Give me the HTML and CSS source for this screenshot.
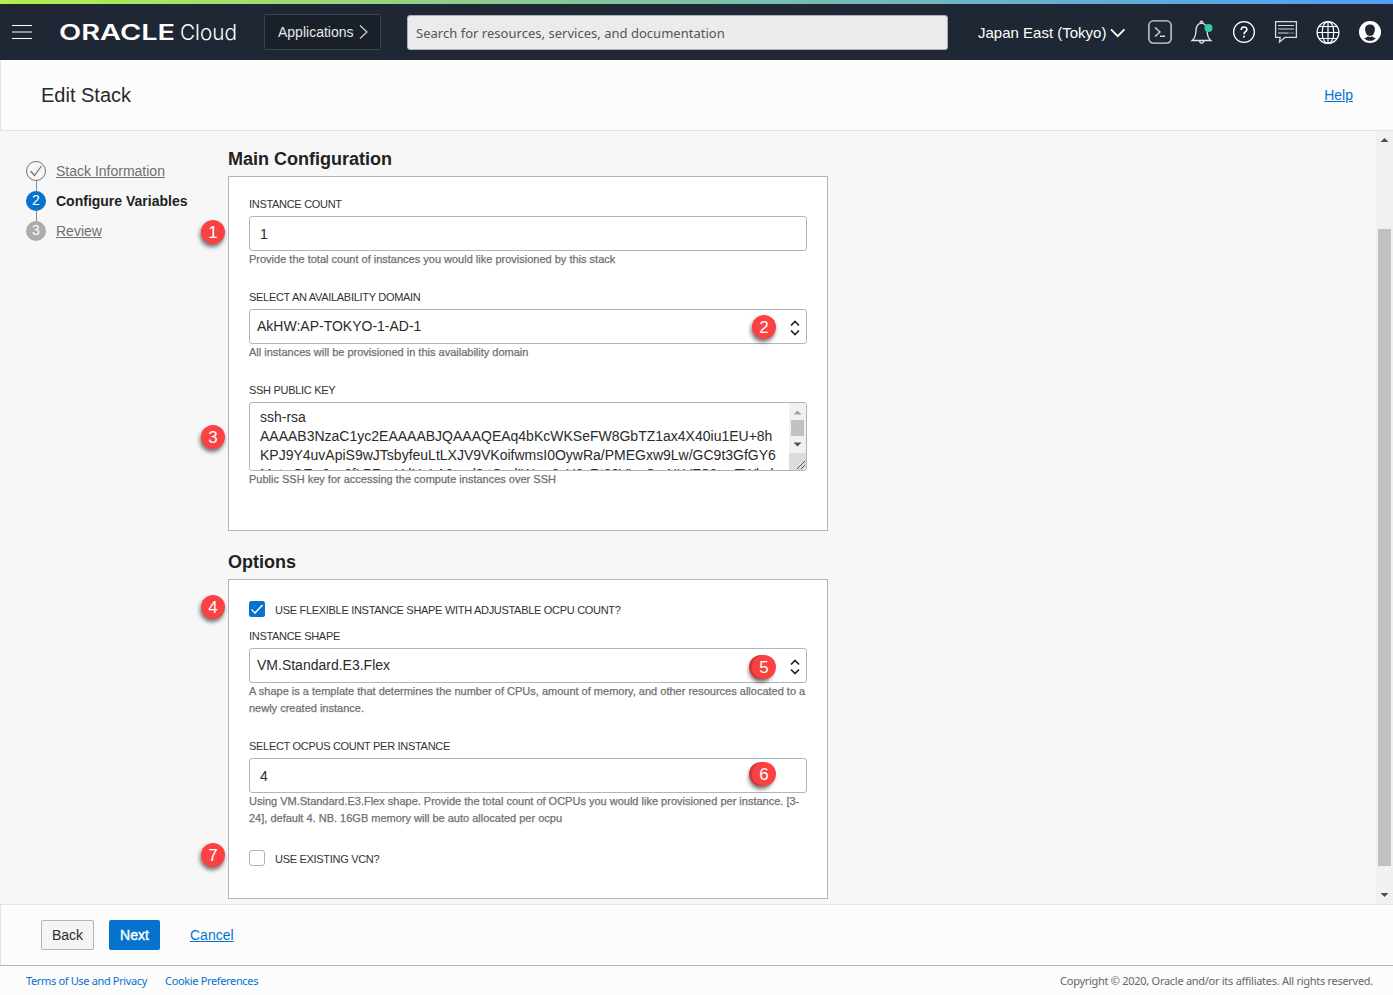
FILE: index.html
```html
<!DOCTYPE html>
<html lang="en">
<head>
<meta charset="utf-8">
<title>Edit Stack</title>
<link rel="stylesheet" href="styles.css">
</head>
<body>
<div class="stripe"></div>
<header class="topbar">
  <svg class="menu" width="20" height="16" viewBox="0 0 20 16"><path d="M0 1.5h20M0 14.5h20" stroke="#fff"/><path d="M0 8h20" stroke="#8e9398" stroke-width="2"/></svg>
  <svg class="logo" width="180" height="26" viewBox="0 0 180 26" fill="#fff"><text class="logo-oracle" x="-1" y="20.800" textLength="116" lengthAdjust="spacingAndGlyphs">ORACLE</text><text class="logo-cloud" x="120" y="20.800" textLength="57" lengthAdjust="spacingAndGlyphs">Cloud</text></svg>
  <div class="apps"><span>Applications</span><svg width="9" height="16" viewBox="0 0 9 16" fill="none" stroke="#d0d3d5" stroke-width="1.2"><path d="M1 1.5l7 6.5-7 6.5"/></svg></div>
  <div class="search">Search for resources, services, and documentation</div>
  <div class="region"><span>Japan East (Tokyo)</span><svg width="16" height="10" viewBox="0 0 16 10" fill="none" stroke="#fff" stroke-width="1.8"><path d="M1 1.3l6.7 6.8 6.7-6.8"/></svg></div>
  <div class="icons">
    <svg width="24" height="24" viewBox="0 0 24 24" fill="none" stroke="#d6d8da" stroke-width="1.4"><rect x=".9" y=".9" width="22.2" height="22.2" rx="4.5"/><path d="M7 7.5l5 4.5-5 4.5M12 16.3h5"/></svg>
    <svg width="24" height="24" viewBox="0 0 24 24" fill="none" stroke="#e4e6e7" stroke-width="1.3"><path d="M2.2 20.5c2.5-2 3.5-4.500 3.700-9.200C6.100 6.500 7.700 3.400 11.500 3.200c3.800.2 5.400 3.300 5.600 8.100.2 4.700 1.200 7.200 3.700 9.200zM9.500 20.500c.2 3.400 4.200 3.400 4.400 0M10.300 3.200c-.8-2.800 3.200-2.800 2.400 0"/><circle cx="18.500" cy="8" r="4" fill="#36c9a6" stroke="none"/></svg>
    <svg width="24" height="24" viewBox="0 0 24 24" fill="none" stroke="#fff" stroke-width="1.300"><circle cx="12" cy="12" r="10.400"/><path d="M9.200 10c0-3.900 5.700-3.900 5.700-.5 0 2.200-2.900 2.200-2.900 4.700" stroke-width="1.600"/><path d="M12 15.800v1.800" stroke-width="1.800"/></svg>
    <svg width="24" height="24" viewBox="0 0 24 24" fill="none" stroke="#d9dbdd" stroke-width="1.300"><path d="M1.600 1.600h20.800v15.800H11l-5.500 4.500.7-4.500H1.600z"/><path d="M4 5.500h16M4 9h16M4 13h10" stroke-width="1.200"/><path d="M14.500 13H20" stroke-width="1.200" stroke-dasharray="1 1"/></svg>
    <svg width="24" height="24" viewBox="0 0 24 24" fill="none" stroke="#fff" stroke-width="1.200"><circle cx="12" cy="12.500" r="10.900"/><ellipse cx="12" cy="12.500" rx="5.800" ry="10.900"/><path d="M12 1.600v21.800M1 12.500h22M3.200 6.500h17.600M3.200 18.500h17.600"/></svg>
    <svg width="24" height="24" viewBox="0 0 24 24"><circle cx="12" cy="12" r="11" fill="#fff"/><path d="M12 4.500c-3.500 0-5 2.300-4.900 5 .1 2.900 1.200 4.700 2.500 5.900.3 1-.5 1.800-3.500 2.600 3 3.800 8.800 3.800 11.800 0-3-.8-3.800-1.600-3.500-2.600 1.300-1.200 2.400-3 2.500-5.900.1-2.700-1.400-5-4.900-5z" fill="#1e2733"/><path d="M4.500 18.300c3-1.500 5.200-1.500 5.200-2.800 1.300 1.300 3.300 1.300 4.600 0 0 1.300 2.200 1.300 5.200 2.800" fill="none" stroke="#fff"/></svg>
  </div>
</header>
<section class="titlebar"><h1>Edit Stack</h1><a class="link">Help</a></section>
<div class="body">
  <nav class="steps">
    <div class="step"><svg width="20" height="20" viewBox="0 0 20 20" fill="none" stroke="#707070"><circle cx="10" cy="10" r="9.500"/><path d="M4.500 10l4 4.500 7-9.500" stroke-width="1.200"/></svg><a>Stack Information</a></div>
    <div class="step current"><span class="dot">2</span><b>Configure Variables</b></div>
    <div class="step todo"><span class="dot">3</span><a>Review</a></div>
  </nav>
  <main class="content">
    <h2>Main Configuration</h2>
    <div class="panel panel-main">
      <div class="field"><label>Instance count</label><div class="input">1</div><p>Provide the total count of instances you would like provisioned by this stack</p><span class="pin pin-side">1</span></div>
      <div class="field"><label>Select an availability domain</label><div class="input select"><span>AkHW:AP-TOKYO-1-AD-1</span><svg width="10" height="16" viewBox="0 0 10 16" fill="none" stroke="#222" stroke-width="1.700"><path d="M1 5.500l4-4 4 4M1 10.500l4 4 4-4"/></svg></div><p>All instances will be provisioned in this availability domain</p><span class="pin pin-in">2</span></div>
      <div class="field"><label>SSH public key</label>
        <div class="textarea"><div class="key"><div>ssh-rsa</div><div>AAAAB3NzaC1yc2EAAAABJQAAAQEAq4bKcWKSeFW8GbTZ1ax4X40iu1EU+8h</div><div>KPJ9Y4uvApiS9wJTsbyfeuLtLXJV9VKoifwmsI0OywRa/PMEGxw9Lw/GC9t3GfGY6</div><div class="key-cut">MotwGEw0va0fLPFxuYdHoLA0eed0rtQadIWwo0vU0cRt00VLwCmNLVFS0awTWlvd</div></div>
        <svg width="17" height="67" viewBox="0 0 17 67"><path fill="#f1f1f1" d="M0 0h17v50H0z"/><path fill="#a3a3a3" d="M4.500 11.500l4-4 4 4z"/><path fill="#c1c1c1" d="M2 17h13v16H2z"/><path fill="#505050" d="M4.500 39.500l4 4 4-4z"/><path fill="#dcdcdc" d="M0 50h17v17H0z"/><path d="M8 66l8-8M12 66l4-4" stroke="#555"/></svg></div>
        <p>Public SSH key for accessing the compute instances over SSH</p><span class="pin pin-ssh">3</span></div>
    </div>
    <h2 class="h2-options">Options</h2>
    <div class="panel panel-options">
      <div class="check"><svg class="tick" width="16" height="16" viewBox="0 0 16 16"><rect width="16" height="16" rx="2.500" fill="#0572ce"/><path d="M2.500 8.500l3.500 3.500 7.500-8" fill="none" stroke="#fff" stroke-width="1.400"/></svg><label>Use flexible instance shape with adjustable OCPU count?</label><span class="pin pin-check">4</span></div>
      <div class="field"><label>Instance shape</label><div class="input select"><span>VM.Standard.E3.Flex</span><svg width="10" height="16" viewBox="0 0 10 16" fill="none" stroke="#222" stroke-width="1.700"><path d="M1 5.500l4-4 4 4M1 10.500l4 4 4-4"/></svg></div><p>A shape is a template that determines the number of CPUs, amount of memory, and other resources allocated to a<br>newly created instance.</p><span class="pin pin-in pin-shape double">5</span></div>
      <div class="field field-ocpu"><label>Select OCPUs count per instance</label><div class="input">4</div><p>Using VM.Standard.E3.Flex shape. Provide the total count of OCPUs you would like provisioned per instance. [3-<br>24], default 4. NB. 16GB memory will be auto allocated per ocpu</p><span class="pin pin-in pin-ocpu double">6</span></div>
      <div class="check check-vcn"><span class="box"></span><label>Use existing VCN?</label><span class="pin pin-check pin-vcn">7</span></div>
    </div>
  </main>
  <svg class="scroll" width="17" height="773" viewBox="0 0 17 773"><path fill="#f1f1f1" d="M0 0h17v773H0z"/><path fill="#505050" d="M4.500 11l4-4 4 4z"/><path fill="#c1c1c1" d="M2 98h13v637H2z"/><path fill="#505050" d="M4.500 762l4 4 4-4z"/></svg>
</div>
<div class="actions"><span class="btn back">Back</span><span class="btn next">Next</span><a class="link cancel">Cancel</a></div>
<footer class="footer"><a>Terms of Use and Privacy</a><a class="cookies">Cookie Preferences</a><span class="copy">Copyright © 2020, Oracle and/or its affiliates. All rights reserved.</span></footer>
</body>
</html>
```
FILE: styles.css
```css
* { box-sizing: border-box; }
body { margin: 0; width: 1393px; height: 995px; overflow: hidden; background: #f7f7f7; color: #2a2a2a; font: 14px/20px "Liberation Sans", Arial, sans-serif; display: flex; flex-direction: column; }
svg { display: block; flex: none; }
h1, h2, p { margin: 0; }
.stripe { height: 4px; flex: none; background: linear-gradient(90deg, #b4ef4c, #8bcb91 36%, #6cb5c5 69%, #529cf8); }
.topbar { height: 56px; flex: none; background: #1e2733; display: flex; align-items: center; color: #fff; padding-left: 12px; }
.logo { margin-left: 28px; overflow: visible; }
.logo-oracle { font: 600 21px "Inter", sans-serif; }
.logo-cloud { font: 300 22px "Inter", sans-serif; }
.apps { margin-left: 24px; width: 117px; height: 36px; border: 1px solid #3a434d; border-radius: 2px; background: #19202a; display: flex; align-items: center; gap: 5px; padding-left: 13px; color: #e8e8e8; }
.search { margin-left: 26px; margin-top: 1px; width: 541px; height: 35px; border: 1px solid #a9b0ba; border-radius: 3px; background: #ebebeb; color: #555; font: 13px/34px "Noto Sans", sans-serif; letter-spacing: .02px; padding-left: 8px; white-space: nowrap; }
.region { margin-left: 30px; display: flex; align-items: center; gap: 4px; width: 170px; white-space: nowrap; font-size: 15px; line-height: 22px; padding-top: 1px; }
.icons { display: flex; gap: 18px; }
.titlebar { height: 71px; flex: none; background: #fcfcfc; border-left: 1px solid #e3e3e3; border-bottom: 1px solid #e3e3e3; display: flex; align-items: center; justify-content: space-between; padding: 0 40px; }
.titlebar h1 { font: 20px/24px "Liberation Sans", Arial, sans-serif; }
.link { color: #0572ce; text-decoration: underline; }
.body { height: 773px; flex: none; display: flex; }
.steps { width: 228px; padding: 30px 0 0 26px; display: flex; flex-direction: column; gap: 10px; }
.step { display: flex; gap: 10px; height: 20px; line-height: 21px; color: #707070; position: relative; }
.step a { text-decoration: underline; }
.step + .step::before { content: ""; position: absolute; left: 10px; top: -10px; width: 1px; height: 10px; background: #8b8b8b; }
.current { color: #222; }
.dot { width: 20px; height: 20px; border-radius: 50%; background: #0572ce; color: #fff; text-align: center; line-height: 19px; }
.todo .dot { background: #acacac; }
.content { width: 600px; padding-top: 16px; }
h2 { font: bold 18px/24px "Liberation Sans", Arial, sans-serif; height: 29px; color: #222; }
.h2-options { margin-top: 19px; }
.panel { width: 600px; border: 1px solid #aeb5bf; background: #fff; padding: 17px 20px 0; }
.panel-main { height: 355px; }
.panel-options { height: 320px; padding-top: 20px; }
.field { position: relative; height: 93px; }
.field label { display: block; height: 22px; }
label { font-size: 11px; line-height: 20px; letter-spacing: -.3px; text-transform: uppercase; color: #333; white-space: nowrap; }
.input { height: 35px; width: 558px; border: 1px solid #aeb5bf; border-radius: 3px; background: #fff; line-height: 35px; padding: 0 10px; }
.select { padding: 0 6px 0 7px; display: flex; justify-content: space-between; align-items: center; line-height: 33px; }
.select svg { margin-top: 2px; }
p { font-size: 11px; line-height: 17px; color: #707070; white-space: nowrap; -webkit-text-stroke: .25px #707070; }
.textarea { width: 558px; height: 69px; border: 1px solid #aeb5bf; border-radius: 3px; overflow: hidden; display: flex; }
.key { width: 539px; flex: none; overflow: hidden; padding: 5px 0 0 10px; line-height: 19px; white-space: nowrap; }
.key-cut { letter-spacing: -.22px; }
.check { height: 19px; position: relative; display: flex; align-items: center; gap: 10px; }
.check + .field { margin-top: 7px; height: 110px; }
.field-ocpu { height: 110px; }
.check-vcn { margin-top: 2px; }
.check-vcn label { padding-top: 2px; }
.tick { margin-top: -2px; }
.box { width: 16px; height: 16px; border: 1px solid #aeb5bf; border-radius: 3px; background: #fff; }
.pin { position: absolute; width: 24px; height: 24px; border-radius: 50%; background: #fb4141; color: #fff; font: 17px/25px "Liberation Sans", Arial, sans-serif; text-align: center; box-shadow: -1px 3px 4px rgba(0,0,0,.55); }
.pin-side { left: -48px; top: 26px; }
.pin-in { left: 503px; top: 28px; }
.pin-ssh { left: -48px; top: 45px; }
.pin-check { left: -48px; top: -5px; }
.pin-vcn { top: -5px; }
.pin-shape { top: 29px; }
.pin-ocpu { top: 26px; }
.double { box-shadow: -3px 0 0 #d93338, -3px 3px 4px rgba(0,0,0,.6); }
.scroll { margin-left: auto; }
.actions { height: 61px; flex: none; background: #fcfcfc; border-top: 1px solid #e3e3e3; border-left: 1px solid #e3e3e3; padding-left: 40px; display: flex; align-items: center; }
.btn { height: 30px; line-height: 28px; border-radius: 2px; text-align: center; }
.back { width: 53px; border: 1px solid #aeb5bf; background: #f5f5f5; }
.next { width: 51px; margin-left: 15px; line-height: 30px; background: #0572ce; color: #fff; -webkit-text-stroke: .4px #fff; }
.cancel { margin-left: 30px; }
.footer { height: 30px; flex: none; border-top: 1px solid #b3b5bd; background: #fcfcfc; display: flex; font: 11px/30px "Noto Sans", sans-serif; letter-spacing: -.28px; color: #666; padding: 0 20px 0 26px; white-space: nowrap; }
.footer a { color: #0572ce; letter-spacing: -.35px; }
.cookies { margin-left: 18px; }
.copy { margin-left: auto; }
```
